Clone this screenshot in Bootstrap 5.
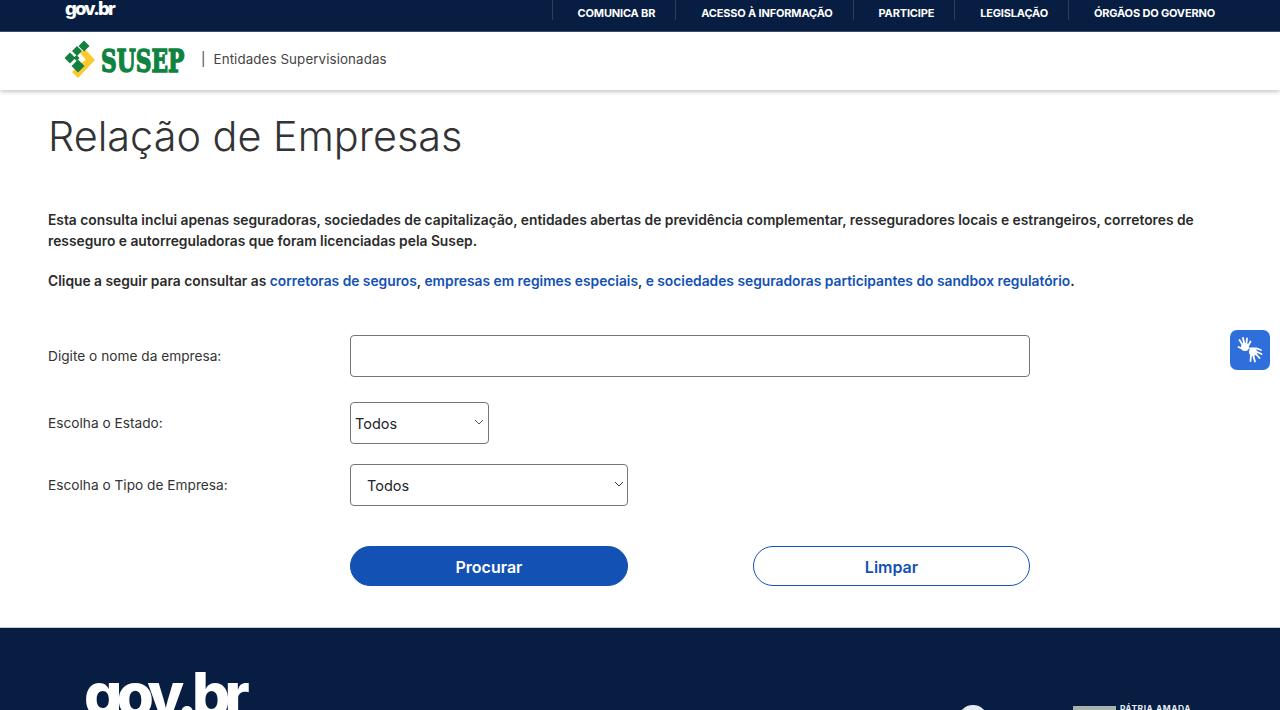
<!DOCTYPE html>
<html lang="pt-BR">
<head>
<meta charset="utf-8">
<title>Relação de Empresas</title>
<link href="https://cdn.jsdelivr.net/npm/bootstrap@5.3.0/dist/css/bootstrap.min.css" rel="stylesheet">
<style>
html,body{height:710px;overflow:hidden}
body{font-family:"Inter","Liberation Sans",sans-serif;color:#212529;background:#fff;position:relative}
.topbar{background:#071d41;height:32px;border-bottom:1px solid #41516d;padding-left:65px;padding-right:45px}
.govsmall{font-weight:800;font-size:18.5px;letter-spacing:-1.8px;color:#fff;line-height:17px}
.toplink{font-size:11px;font-weight:700;color:#fff;text-decoration:none;height:20px;line-height:26px;padding:0 20px 0 25px;border-left:1px solid #2c3e5d;white-space:nowrap;letter-spacing:-.17px}
.brandbar{height:58px;padding-left:64px;box-shadow:0 2px 4px rgba(0,0,0,.22);position:relative;background:#fff}
.brandtag{font-size:13.35px;color:#444;margin-left:15px;padding-bottom:4px;font-weight:400;letter-spacing:.1px}
.brandtag span{margin-right:8px}
.mainarea{padding:21px 48px 0;height:537px}
.pagetitle{font-weight:300;font-size:41.4px;line-height:50px;color:#333;margin:0;padding:0}
.introtext{font-size:13.8px;font-weight:600;line-height:21px;color:#2b2b2b;margin:0;max-width:1160px}
.introtext a{color:#1351b4;text-decoration:none}
.intro1{margin-top:49px}
.intro2{margin-top:19px}
.formgrid{display:grid;grid-template-columns:302px 680px;margin-top:43px}
.fieldlabel{font-size:13.7px;color:#333;margin:0;align-self:center}
.nameinput{height:42px;border:1px solid #757575;border-radius:4px;box-shadow:none}
.gap-row1{grid-column:1/3;height:25px}
.gap-row2{grid-column:1/3;height:20px}
.gap-row3{grid-column:1/3;height:40px}
.selwrap{position:relative;height:42px}
.choice{appearance:none;background:#fff;height:42px;border:1px solid #757575;border-radius:4px;font-size:14.5px;color:#212529;display:block;outline:0}
.choice-a{width:139px;padding:2px 0 0 4px}
.choice-b{width:278px;padding:2px 0 0 16px}
.chev{position:absolute;top:17px;pointer-events:none}
.chev-a{left:124px}
.chev-b{left:264px}
.btnrow{display:flex;justify-content:space-between;align-items:stretch}
.actionbtn{height:40px;border-radius:20px;font-size:16px;font-weight:600;padding:4px 0 0;line-height:1.2;box-shadow:none}
.btn-go{width:278px;background:#1351b4;border:1px solid #1351b4;color:#fff}
.btn-clear{width:277px;background:#fff;border:1px solid #1351b4;color:#1351b4}
.sitefooter{background:#071d41;height:83px;border-top:1px solid #c8ccd2;overflow:hidden;position:relative;padding:36px 0 0 84px}
.govbig{font-weight:800;font-size:60px;letter-spacing:-5.6px;line-height:60px;color:#fff}
.footseal{position:absolute;left:958px;top:77px;width:30px;height:30px;border-radius:50%;background:#e6ebf2}
.footflag{position:absolute;left:1073px;top:78px;width:43px;height:20px;background:#a9b3ab}
.footmotto{position:absolute;left:1120px;top:76px;font-size:8.5px;font-weight:700;color:#e8edf5;letter-spacing:.5px;line-height:10px}
.signwidget{position:absolute;left:1230px;top:330px;width:40px;height:40px;border-radius:7px;background:#2f6fdb;display:flex;align-items:center;justify-content:center}
</style>
</head>
<body>
<div class="topbar d-flex justify-content-between align-items-start">
  <div class="govsmall">gov.br</div>
  <nav class="d-flex">
    <a class="toplink" href="#">COMUNICA BR</a>
    <a class="toplink" href="#">ACESSO À INFORMAÇÃO</a>
    <a class="toplink" href="#">PARTICIPE</a>
    <a class="toplink" href="#">LEGISLAÇÃO</a>
    <a class="toplink" href="#">ÓRGÃOS DO GOVERNO</a>
  </nav>
</div>
<header class="brandbar d-flex align-items-center">
  <svg width="122" height="42" viewBox="0 0 122 42" aria-label="SUSEP">
    <path fill="#fdc92f" d="M16 13l5-4 10 11-17 18-6-6 9-9 5-3-6-7z"/>
    <g fill="#12813f">
      <path d="M20 .5L25.500 6 20 11.500 14.500 6z"/>
      <path d="M13 6L18 11 13 16 8 11z"/>
      <path d="M6 12.500L11.500 18 6 23.500 .5 18z"/>
      <path d="M12.500 15L15.500 18 12.500 21 9.500 18z"/>
      <path d="M14 19.500L20.500 26 14 32.500 7.500 26z"/>
    </g>
    <text transform="translate(37 32) scale(.68 1)" font-family="DejaVu Serif" font-weight="700" font-size="32" fill="#0f8340" stroke="#0f8340" stroke-width="1.500">SUSEP</text>
  </svg>
  <div class="brandtag"><span>|</span>Entidades Supervisionadas</div>
</header>
<main class="mainarea">
  <h1 class="pagetitle">Relação de Empresas</h1>
  <p class="introtext intro1">Esta consulta inclui apenas seguradoras, sociedades de capitalização, entidades abertas de previdência complementar, resseguradores locais e estrangeiros, corretores de resseguro e autorreguladoras que foram licenciadas pela Susep.</p>
  <p class="introtext intro2">Clique a seguir para consultar as <a href="#">corretoras de seguros</a>, <a href="#">empresas em regimes especiais</a>, <a href="#">e sociedades seguradoras participantes do sandbox regulatório</a>.</p>
  <form class="formgrid">
    <label class="fieldlabel" for="nome">Digite o nome da empresa:</label>
    <input id="nome" class="form-control nameinput" type="text">
    <div class="gap-row1"></div>
    <label class="fieldlabel" for="uf">Escolha o Estado:</label>
    <div class="selwrap">
      <select id="uf" class="choice choice-a"><option>Todos</option></select>
      <svg class="chev chev-a" width="10" height="6" viewBox="0 0 10 6"><path d="M1 1l4 4 4-4" fill="none" stroke="#555" stroke-width="1"/></svg>
    </div>
    <div class="gap-row2"></div>
    <label class="fieldlabel" for="tipo">Escolha o Tipo de Empresa:</label>
    <div class="selwrap">
      <select id="tipo" class="choice choice-b"><option>Todos</option></select>
      <svg class="chev chev-b" width="10" height="6" viewBox="0 0 10 6"><path d="M1 1l4 4 4-4" fill="none" stroke="#333" stroke-width="1"/></svg>
    </div>
    <div class="gap-row3"></div>
    <div></div>
    <div class="btnrow">
      <button type="button" class="btn actionbtn btn-go">Procurar</button>
      <button type="button" class="btn actionbtn btn-clear">Limpar</button>
    </div>
  </form>
</main>
<footer class="sitefooter">
  <div class="govbig">gov.br</div>
  <div class="footseal"></div>
  <div class="footflag"></div>
  <div class="footmotto">PÁTRIA AMADA</div>
</footer>
<div class="signwidget" aria-label="VLibras">
  <svg width="30" height="30" viewBox="0 0 30 30" fill="#fff" stroke="#fff" stroke-linecap="round">
    <circle cx="10" cy="12" r="4" stroke="none"/>
    <path stroke-width="1.800" fill="none" d="M9 12L4.500 5M10 12L8 3M11 12L12 3.500M12 13l3.500-6.500M8 14L3.500 12"/>
    <circle cx="18" cy="17" r="4.500" stroke="#2f6fdb"/>
    <path stroke-width="1.800" fill="none" d="M15 13.500h6.500L26 15M20 16l6.500 3M20 18l4.500 5M18 20l2 6.500M16 20l-.5 6"/>
  </svg>
</div>
<script src="https://cdn.jsdelivr.net/npm/bootstrap@5.3.0/dist/js/bootstrap.bundle.min.js"></script>
</body>
</html>
